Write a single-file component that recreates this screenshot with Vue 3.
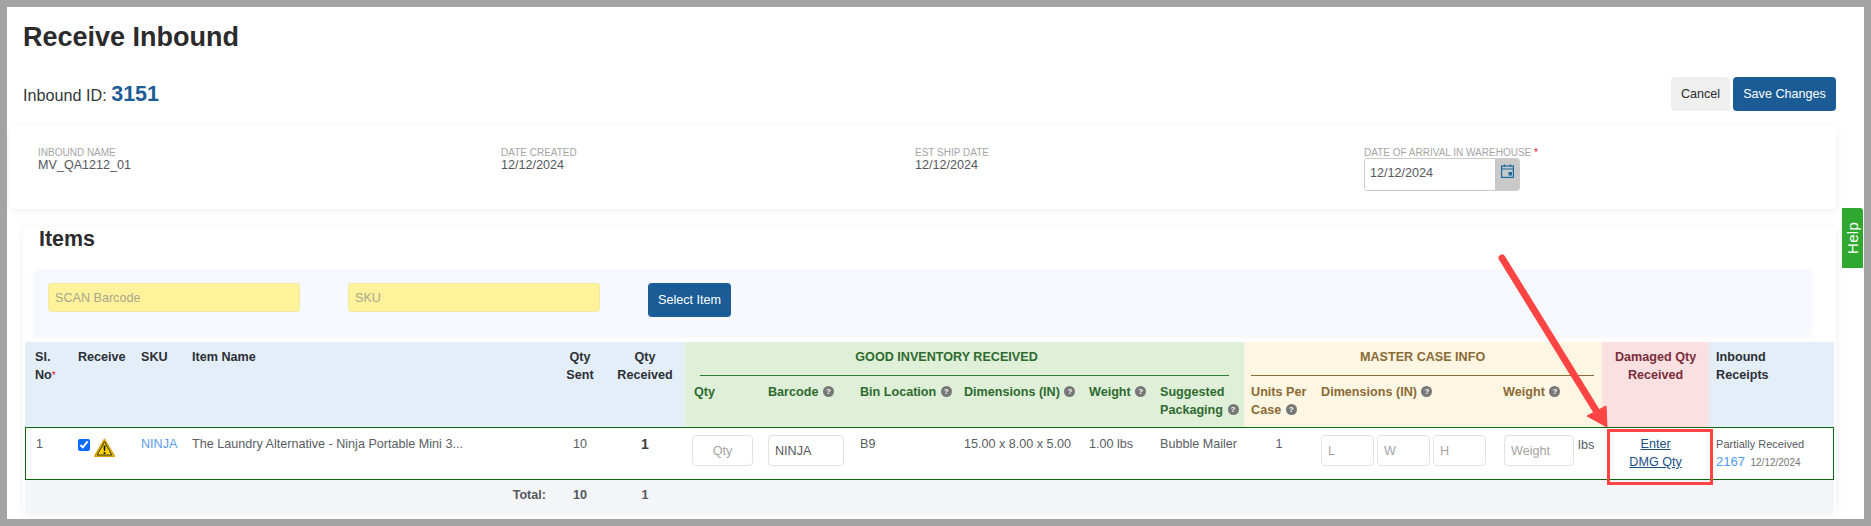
<template>
  <div class="page">
    <h1 class="page-title">Receive Inbound</h1>

    <div class="id-row">
      <div class="inbound-id">Inbound ID: <span class="id-value">3151</span></div>
      <div class="actions">
        <button class="btn btn-light">Cancel</button>
        <button class="btn btn-primary">Save Changes</button>
      </div>
    </div>

    <section class="info-card">
      <div class="info-item" v-for="info in infoItems" :key="info.label">
        <div class="info-label">{{ info.label }}</div>
        <div class="info-value">{{ info.value }}</div>
      </div>
      <div class="info-item">
        <div class="info-label">DATE OF ARRIVAL IN WAREHOUSE <span class="req">*</span></div>
        <div class="date-field">
          <input class="date-input" value="12/12/2024" />
          <span class="date-addon">
            <svg width="13" height="14" viewBox="0 0 13 14" fill="none">
              <rect x="0.6" y="2" width="11.8" height="11.4" stroke="#1b6aa0" stroke-width="1.2" />
              <path d="M0.6 5h11.8" stroke="#1b6aa0" stroke-width="1.2" />
              <path d="M3.5 0.5v2.5M9.5 0.5v2.5" stroke="#1b6aa0" stroke-width="1.2" />
              <rect x="7.5" y="8" width="3.5" height="3.5" fill="#1b6aa0" />
            </svg>
          </span>
        </div>
      </div>
    </section>

    <section class="items-card">
      <h2 class="items-title">Items</h2>

      <div class="scan-panel">
        <input class="scan-input" placeholder="SCAN Barcode" />
        <input class="scan-input" placeholder="SKU" />
        <button class="btn btn-primary btn-select">Select Item</button>
      </div>

      <table class="items-table">
        <colgroup>
          <col v-for="(w, i) in colWidths" :key="i" :width="w" />
        </colgroup>
        <thead>
          <tr class="head-top">
            <th rowspan="2" class="blue pl10">Sl.<br />No<span class="req req-small">*</span></th>
            <th rowspan="2" class="blue pl10">Receive</th>
            <th rowspan="2" class="blue pl10">SKU</th>
            <th rowspan="2" class="blue pl11">Item Name</th>
            <th rowspan="2" class="blue center">Qty<br />Sent</th>
            <th rowspan="2" class="blue center">Qty<br />Received</th>
            <th colspan="6" class="green group">
              <div class="group-inner green-line"><span class="good-title">GOOD INVENTORY RECEIVED</span></div>
            </th>
            <th colspan="3" class="yellow group">
              <div class="group-inner yellow-line">MASTER CASE INFO</div>
            </th>
            <th rowspan="2" class="pink center">Damaged Qty<br />Received</th>
            <th rowspan="2" class="blue pl7">Inbound<br />Receipts</th>
          </tr>
          <tr class="head-sub">
            <th class="green pl9">Qty</th>
            <th class="green pl10">Barcode <span class="tip">?</span></th>
            <th class="green pl10">Bin Location <span class="tip">?</span></th>
            <th class="green pl10">Dimensions (IN) <span class="tip">?</span></th>
            <th class="green pl10">Weight <span class="tip">?</span></th>
            <th class="green pl10">Suggested<br />Packaging <span class="tip">?</span></th>
            <th class="yellow pl7">Units Per<br />Case <span class="tip">?</span></th>
            <th class="yellow pl10">Dimensions (IN) <span class="tip">?</span></th>
            <th class="yellow pl10">Weight <span class="tip">?</span></th>
          </tr>
        </thead>
        <tbody>
          <tr class="item-row">
            <td class="pl10">1</td>
            <td class="pl10">
              <div class="receive-cell">
                <input type="checkbox" class="check" checked />
                <svg class="warn" width="23" height="20" viewBox="0 0 22 20">
                  <path d="M11 1.5 L20.8 18.2 H1.2 Z" fill="#ffd400" stroke="#d9a400" stroke-width="1.6" stroke-linejoin="round" />
                  <path d="M11 3.8 L18.4 17 H3.6 Z" fill="#ffd400" stroke="#222" stroke-width="0.9" stroke-linejoin="round" />
                  <path d="M10 7.5h2l-0.4 5.5h-1.2z" fill="#111" />
                  <circle cx="11" cy="15" r="1.1" fill="#111" />
                </svg>
              </div>
            </td>
            <td class="pl10"><a class="sku-link">NINJA</a></td>
            <td class="pl11 nowrap">The Laundry Alternative - Ninja Portable Mini 3...</td>
            <td class="center">10</td>
            <td class="center strong">1</td>
            <td class="pl7"><input class="cell-input qty-input center-text" placeholder="Qty" /></td>
            <td class="pl10"><input class="cell-input barcode-input" value="NINJA" /></td>
            <td class="pl10">B9</td>
            <td class="pl10">15.00 x 8.00 x 5.00</td>
            <td class="pl10">1.00 lbs</td>
            <td class="pl10">Bubble Mailer</td>
            <td class="center units">1</td>
            <td class="pl10">
              <div class="dims">
                <input class="cell-input dim-input" placeholder="L" />
                <input class="cell-input dim-input" placeholder="W" />
                <input class="cell-input dim-input" placeholder="H" />
              </div>
            </td>
            <td class="pl11">
              <div class="weight-cell">
                <input class="cell-input weight-input" placeholder="Weight" />
                <span>lbs</span>
              </div>
            </td>
            <td class="center"><a class="dmg-link">Enter<br />DMG Qty</a></td>
            <td class="pl7 receipts">
              <div class="receipt-status">Partially Received</div>
              <div><a class="receipt-link">2167</a> <span class="receipt-date">12/12/2024</span></div>
            </td>
          </tr>
        </tbody>
        <tfoot>
          <tr class="total-row">
            <td colspan="4" class="total-label">Total:</td>
            <td class="center">10</td>
            <td class="center">1</td>
            <td colspan="11"></td>
          </tr>
        </tfoot>
      </table>
    </section>

    <button class="help-tab">Help</button>
  </div>

  <!-- annotation drawn on top of the screenshot -->
  <svg class="annotation" width="1871" height="526" viewBox="0 0 1871 526">
    <path d="M1502 258 L1597 412" stroke="#ff4444" stroke-width="7" stroke-linecap="round" fill="none" />
    <path d="M1607 427 L1587 416 L1606 406 Z" fill="#ff4444" stroke="#ff4444" stroke-width="1" stroke-linejoin="round" />
    <rect x="1608.5" y="430.5" width="103" height="53" fill="none" stroke="#ff4444" stroke-width="3" />
  </svg>
</template>

<script setup>
const infoItems = [
  { label: 'INBOUND NAME', value: 'MV_QA1212_01' },
  { label: 'DATE CREATED', value: '12/12/2024' },
  { label: 'EST SHIP DATE', value: '12/12/2024' }
]

const colWidths = [43, 63, 50, 374, 50, 80, 73, 92, 104, 125, 71, 94, 67, 182, 109, 107, 125]
</script>

<style>
body {
  margin: 0;
  background: #a3a3a3;
}
</style>

<style scoped>
.page {
  position: relative;
  box-sizing: border-box;
  width: 1857px;
  height: 512px;
  margin: 7px 0 0 7px;
  padding: 13px 28px 0 3px;
  background: #fff;
  font-family: "Liberation Sans", Arial, sans-serif;
  font-size: 12.6px;
  color: #5a5d63;
  overflow: hidden;
}

.page-title {
  margin: 0 0 0 13px;
  font-size: 27px;
  line-height: 35px;
  font-weight: 700;
  color: #2b2b2d;
}

.id-row {
  display: flex;
  align-items: center;
  justify-content: space-between;
  margin: 22px 0 15px 13px;
}

.inbound-id {
  font-size: 16.2px;
  color: #33363a;
}

.id-value {
  font-size: 21.5px;
  font-weight: 700;
  color: #1b5c97;
}

.actions {
  display: flex;
  gap: 3px;
}

.btn {
  height: 34px;
  padding: 0;
  border: 0;
  border-radius: 4px;
  font-family: inherit;
  font-size: 12.6px;
}

.btn-light {
  width: 59px;
  background: #efefef;
  color: #2b2b2d;
}

.btn-primary {
  width: 103px;
  background: #1b5c97;
  color: #fff;
}

.info-card {
  display: grid;
  grid-template-columns: 463px 414px 449px 1fr;
  box-sizing: border-box;
  height: 83px;
  padding: 21px 28px 0;
  background: #fff;
  border-radius: 4px;
  box-shadow: 0 2px 8px rgba(0, 0, 0, 0.07);
}

.info-label {
  font-size: 10px;
  line-height: 11px;
  color: #a5a5a5;
}

.info-value {
  font-size: 12.6px;
  line-height: 14px;
  color: #55585c;
}

.req {
  color: #e8112d;
}

.req-small {
  font-size: 10px;
  font-weight: 400;
}

.date-field {
  display: flex;
  width: 156px;
  height: 33px;
  box-sizing: border-box;
  border: 1px solid #cccccc;
  border-radius: 3px;
  overflow: hidden;
}

.date-input {
  width: 130px;
  min-width: 0;
  box-sizing: border-box;
  padding: 0 5px 3px;
  border: 0;
  font-family: inherit;
  font-size: 12.6px;
  color: #55585c;
  outline: none;
}

.date-addon {
  flex: 1;
  padding: 5px 0 0 6px;
  background: #c9c9c9;
}

.items-card {
  box-sizing: border-box;
  width: 1813px;
  height: 285px;
  margin: 18px 0 0 13px;
  padding: 0 2px;
  background: #fff;
  border-radius: 4px;
  box-shadow: 0 2px 8px rgba(0, 0, 0, 0.07);
}

.items-title {
  margin: 0 0 18px 14px;
  font-size: 21.4px;
  line-height: 24px;
  font-weight: 700;
  color: #2b2b2d;
}

.scan-panel {
  display: flex;
  align-items: flex-start;
  box-sizing: border-box;
  width: 1777px;
  height: 66px;
  margin: 0 0 7px 9px;
  padding: 14px 14px 0;
  background: #f5f9fd;
  border-radius: 4px;
  box-shadow: 0 2px 5px rgba(0, 0, 0, 0.05);
}

.scan-input {
  width: 252px;
  height: 29px;
  box-sizing: border-box;
  margin-right: 48px;
  padding: 0 6px;
  border: 1px solid #f0e9a6;
  border-radius: 3px;
  background: #fff29b;
  font-family: inherit;
  font-size: 12.6px;
  outline: none;
}

.scan-input::placeholder {
  color: #a8a68e;
}

.btn-select {
  width: 83px;
  background: #1b5c97;
}

.items-table {
  width: 1809px;
  table-layout: fixed;
  border-collapse: separate;
  border-spacing: 0;
}

.items-table th {
  padding: 6px 0 0;
  font-size: 12.6px;
  line-height: 18px;
  font-weight: 700;
  text-align: left;
  vertical-align: top;
  color: #2c2f36;
}

.items-table .head-sub th {
  padding-top: 7px;
}

.head-top {
  height: 34px;
}

.head-sub {
  height: 51px;
}

.items-table th.center,
.items-table td.center {
  text-align: center;
}

.pl7 {
  padding-left: 7px !important;
}

.pl9 {
  padding-left: 9px !important;
}

.pl10 {
  padding-left: 10px !important;
}

.pl11 {
  padding-left: 11px !important;
}

.items-table th.blue {
  background: #e4eef9;
}

.items-table th.green {
  background: #dfefd8;
  color: #2e6b2f;
}

.items-table th.yellow {
  background: #fdf6e3;
  color: #8a6a35;
}

.items-table th.pink {
  background: #fae0e0;
  color: #7b2d3b;
}

.items-table th.group {
  padding: 0;
}

.group-inner {
  margin: 0 15px 0;
  padding: 6px 0 9px;
  border-bottom: 1px solid;
  text-align: center;
}

.green-line {
  border-color: #2e7d32;
}

.yellow-line {
  margin: 0 8px 0 7px;
  border-color: #8a6a35;
}

.good-title {
  margin-right: 36px;
}

.tip {
  display: inline-block;
  overflow: hidden;
  width: 11px;
  height: 11px;
  margin-left: 1px;
  border-radius: 50%;
  background: #777;
  color: #fff;
  font-size: 8px;
  line-height: 11px;
  text-align: center;
  vertical-align: -1px;
}

.item-row td {
  box-sizing: border-box;
  height: 53px;
  padding: 7px 0 0;
  line-height: 18px;
  vertical-align: top;
  background: #fff;
  border-top: 1px solid #0d6b0d;
  border-bottom: 1px solid #0d6b0d;
}

.item-row td:first-child {
  border-left: 1px solid #0d6b0d;
}

.item-row td:last-child {
  border-right: 1px solid #0d6b0d;
}

.item-row td.units {
  padding-left: 3px;
}

.nowrap {
  white-space: nowrap;
}

.receive-cell {
  display: flex;
  align-items: flex-start;
  gap: 3px;
}

.check {
  width: 12px;
  height: 12px;
  margin: 4px 0 0;
  accent-color: #0a6cff;
}

.warn {
  margin-top: 3px;
}

.sku-link {
  color: #5b9bf0;
}

.strong {
  font-size: 14px;
  font-weight: 700;
  color: #3a3d42;
}

.cell-input {
  display: block;
  height: 31px;
  box-sizing: border-box;
  padding: 0 6px;
  border: 1px solid #e3e3e3;
  border-radius: 4px;
  background: #fff;
  font-family: inherit;
  font-size: 12.6px;
  color: #55585c;
  outline: none;
}

.cell-input::placeholder {
  color: #a5a5a5;
}

.qty-input {
  width: 61px;
  text-align: center;
}

.barcode-input {
  width: 76px;
}

.dims {
  display: flex;
  gap: 3px;
}

.dim-input {
  width: 53px;
}

.weight-cell {
  display: flex;
  align-items: flex-start;
  gap: 4px;
}

.weight-input {
  width: 70px;
}

.weight-cell span {
  margin-top: 1px;
}

.dmg-link {
  color: #1a4f86;
  text-decoration: underline;
}

.receipt-status {
  font-size: 11px;
  line-height: 17px;
  color: #55585c;
}

.receipts {
  padding-top: 8px !important;
}

.receipt-link {
  font-size: 13px;
  color: #4a9cf5;
}

.receipt-date {
  margin-left: 2px;
  font-size: 10px;
  color: #777;
}

.total-row td {
  height: 32px;
  padding: 0 0 2px;
  box-sizing: border-box;
  background: #f4f5f8;
  font-weight: 700;
  color: #55585c;
}

.total-label {
  padding-right: 9px !important;
  text-align: right;
}

.help-tab {
  position: absolute;
  top: 201px;
  right: 1px;
  width: 21px;
  height: 60px;
  padding: 0;
  border: 0;
  border-radius: 0 0 0 3px;
  background: #2fa82f;
  color: #fff;
  font-family: inherit;
  font-size: 15px;
  letter-spacing: 0.3px;
  writing-mode: vertical-rl;
  transform: rotate(180deg);
}

.annotation {
  position: absolute;
  left: 0;
  top: 0;
  pointer-events: none;
}
</style>
